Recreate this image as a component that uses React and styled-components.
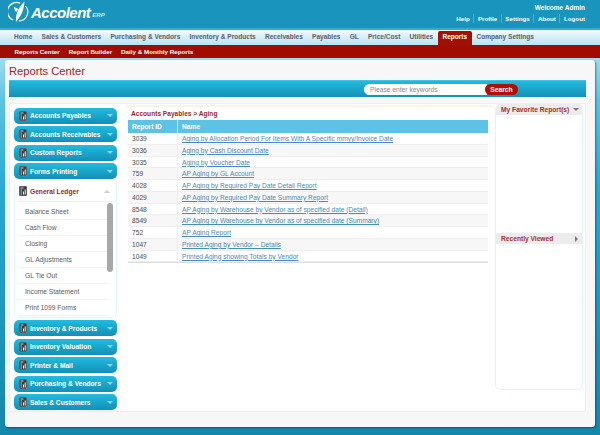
import { createGlobalStyle, styled } from 'styled-components';

const navTabs = [
  'Home',
  'Sales & Customers',
  'Purchasing & Vendors',
  'Inventory & Products',
  'Receivables',
  'Payables',
  'GL',
  'Price/Cost',
  'Utilities',
  'Reports',
  'Company Settings',
];
const topGroups = ['Accounts Payables', 'Accounts Receivables', 'Custom Reports', 'Forms Printing'];
const bottomGroups = ['Inventory & Products', 'Inventory Valuation', 'Printer & Mail', 'Purchasing & Vendors', 'Sales & Customers'];
const ledgerLinks = ['Balance Sheet', 'Cash Flow', 'Closing', 'GL Adjustments', 'GL Tie Out', 'Income Statement', 'Print 1099 Forms'];
const reports = [
  ['3039', 'Aging by Allocation Period For Items With A Specific mmyy/Invoice Date'],
  ['3036', 'Aging by Cash Discount Date'],
  ['3035', 'Aging by Voucher Date'],
  ['759', 'AP Aging by GL Account'],
  ['4028', 'AP Aging by Required Pay Date Detail Report'],
  ['4029', 'AP Aging by Required Pay Date Summary Report'],
  ['8548', 'AP Aging by Warehouse by Vendor as of specified date (Detail)'],
  ['8549', 'AP Aging by Warehouse by Vendor as of specified date (Summary)'],
  ['752', 'AP Aging Report'],
  ['1047', 'Printed Aging by Vendor – Details'],
  ['1049', 'Printed Aging showing Totals by Vendor'],
];

const ReportIcon = () => (
  <svg width="8" height="10" viewBox="0 0 8 10">
    <rect x="0" y="0" width="8" height="10" rx="1" fill="#3a3f42" stroke="#b9c4c8" strokeWidth="0.5" />
    <rect x="1.5" y="1.5" width="3" height="1" fill="#ccc" />
    <rect x="1.5" y="3.5" width="1.5" height="1" fill="#ccc" />
    <rect x="1.5" y="5.5" width="1.5" height="1" fill="#ccc" />
    <rect x="1.5" y="7.5" width="1.5" height="1" fill="#ccc" />
    <rect x="4" y="5.5" width="1" height="3" fill="#eee" />
    <rect x="5.7" y="3.5" width="1" height="5" fill="#eee" />
  </svg>
);

const Logo = () => (
  <svg width="22" height="22" viewBox="0 0 22 22">
    <path d="M12 2.2 A9 9 0 0 0 5 19" fill="none" stroke="#fff" strokeWidth="1.3" />
    <path d="M17.5 5 A9 9 0 0 1 11 20" fill="none" stroke="#fff" strokeWidth="1.1" />
    <path d="M16.5 0.5 C16 6 15 13 8 21 C7.5 15 9 8 16.5 0.5 Z" fill="#fff" />
    <path d="M8 11 C6.5 9 6 7.5 6 6 C8 6.5 9.5 7.5 10.5 8.5 Z" fill="#fff" />
  </svg>
);

const Group = ({ label }) => (
  <GroupBar>
    <ReportIcon />
    <GroupLabel>{label}</GroupLabel>
    <DownArrow $color="#8fd6ea" />
  </GroupBar>
);

const App = () => {
  return (
    <Page>
      <GlobalStyle />
      <Header>
        <Brand>
          <Logo />
          <BrandName>Accolent</BrandName>
          <BrandSuffix>ERP</BrandSuffix>
        </Brand>
        <UserBox>
          <Welcome>Welcome Admin</Welcome>
          <UserLinks>
            {['Help', 'Profile', 'Settings', 'About', 'Logout'].map((link) => (
              <UserLink key={link}>{link}</UserLink>
            ))}
          </UserLinks>
        </UserBox>
      </Header>

      <Nav>
        {navTabs.map((tab) => (
          <NavTab key={tab} $active={tab === 'Reports'}>
            {tab}
          </NavTab>
        ))}
      </Nav>
      <SubNav>
        {['Reports Center', 'Report Builder', 'Daily & Monthly Reports'].map((item) => (
          <SubNavItem key={item}>{item}</SubNavItem>
        ))}
      </SubNav>

      <Card>
        <Title>Reports Center</Title>
        <SearchBar>
          <SearchInput>Please enter keywords</SearchInput>
          <SearchButton>Search</SearchButton>
        </SearchBar>

        <Content>
          <Sidebar>
            {topGroups.map((group) => (
              <Group key={group} label={group} />
            ))}
            <OpenGroup>
              <OpenHeader>
                <ReportIcon />
                <OpenLabel>General Ledger</OpenLabel>
                <UpArrow />
              </OpenHeader>
              <LedgerList>
                {ledgerLinks.map((link) => (
                  <LedgerRow key={link}>{link}</LedgerRow>
                ))}
                <ScrollThumb />
              </LedgerList>
            </OpenGroup>
            {bottomGroups.map((group) => (
              <Group key={group} label={group} />
            ))}
          </Sidebar>

          <Middle>
            <CreamStripe />
            <Breadcrumb>Accounts Payables &gt; Aging</Breadcrumb>
            <Table>
              <HeadRow>
                <IdHead>Report ID</IdHead>
                <NameHead>Name</NameHead>
              </HeadRow>
              {reports.map(([id, name], index) => (
                <Row key={id} $odd={index % 2 === 1}>
                  <IdCell>{id}</IdCell>
                  <NameCell>
                    <ReportLink>{name}</ReportLink>
                  </NameCell>
                </Row>
              ))}
            </Table>
          </Middle>

          <RightPanel>
            <PanelHeader>
              <PanelTitle>My Favorite Report(s)</PanelTitle>
              <DownArrow $color="#777" />
            </PanelHeader>
            <FavoritesBody />
            <PanelHeader>
              <PanelTitle>Recently Viewed</PanelTitle>
              <RightArrow />
            </PanelHeader>
          </RightPanel>
        </Content>
      </Card>
    </Page>
  );
};

export default App;

const GlobalStyle = createGlobalStyle`
  html, body {
    margin: 0;
    padding: 0;
    overflow: hidden;
  }
  * {
    box-sizing: border-box;
  }
`;

const Page = styled.div`
  width: 600px;
  height: 435px;
  overflow: hidden;
  font-family: "Liberation Sans", Arial, sans-serif;
  background: linear-gradient(#9adcf0 60px, #5cc4e6 100px, #23aad6 190px, #1487ad 435px);
`;

const Header = styled.header`
  height: 30px;
  display: flex;
  justify-content: space-between;
  background: #1994bd;
  border-bottom: 2px solid #35abd0;
  padding: 0 15px 0 8px;
`;
const Brand = styled.div`
  display: flex;
  align-items: center;
  height: 28px;
  padding-bottom: 4px;
  color: #fff;
`;
const BrandName = styled.span`
  margin-left: 1px;
  font-size: 15px;
  font-weight: bold;
  font-style: italic;
  letter-spacing: -0.5px;
`;
const BrandSuffix = styled.span`
  margin: 5px 0 0 2px;
  font-size: 6px;
  font-weight: bold;
  font-style: italic;
  color: #cfeaf3;
`;
const UserBox = styled.div`
  display: flex;
  flex-direction: column;
  align-items: flex-end;
  padding-top: 3px;
  color: #fff;
  font-size: 6.5px;
  font-weight: bold;
`;
const Welcome = styled.div`
  height: 9px;
  line-height: 9px;
`;
const UserLinks = styled.div`
  display: flex;
  margin-top: 2px;
  font-size: 6.2px;
`;
const UserLink = styled.span`
  line-height: 9px;
  padding: 0 0 0 3.6px;
  margin-left: 3.6px;
  border-left: 1px solid #4eb0cf;

  &:first-child {
    border-left: none;
    margin-left: 0;
    padding-left: 0;
  }
`;

const Nav = styled.nav`
  height: 15px;
  display: flex;
  align-items: flex-start;
  padding-left: 9.5px;
  background: linear-gradient(#f4fbfd, #b6e3f1);
`;
const NavTab = styled.span`
  height: 14px;
  margin-top: 1px;
  line-height: 12px;
  padding: 0 4.62px;
  font-size: 6.55px;
  font-weight: bold;
  white-space: nowrap;
  border-radius: 2px 2px 0 0;
  color: ${(props) => (props.$active ? '#fff' : '#56606a')};
  background: ${(props) => (props.$active ? '#a00f00' : 'transparent')};
`;

const SubNav = styled.div`
  height: 13px;
  display: flex;
  align-items: center;
  padding-left: 10px;
  background: #a00d00;
`;
const SubNavItem = styled.span`
  padding: 0 4.5px;
  color: #fff;
  font-size: 6.25px;
  font-weight: bold;
  line-height: 10px;
  white-space: nowrap;
`;

const Card = styled.main`
  width: 590px;
  height: 367px;
  margin: 2px 0 0 5px;
  padding: 4px 9px 0 4px;
  background: #f7f7f7;
  border-radius: 3px;
  box-shadow: 1px 1px 2px rgba(0, 40, 60, 0.5);
`;
const Title = styled.h1`
  margin: 0;
  height: 16px;
  line-height: 14px;
  font-size: 11.2px;
  font-weight: normal;
  color: #a4231c;
`;
const SearchBar = styled.div`
  height: 17px;
  display: flex;
  align-items: center;
  justify-content: flex-end;
  padding-right: 68px;
  background: linear-gradient(#22bade, #1690b6);
  border-top: 1px solid #43c3e2;
`;
const SearchInput = styled.div`
  width: 123px;
  height: 11px;
  line-height: 11px;
  padding-left: 6px;
  margin-right: -2px;
  font-size: 6.7px;
  color: #888;
  background: #fff;
  border-radius: 6px 0 0 6px;
`;
const SearchButton = styled.div`
  width: 33px;
  height: 11px;
  line-height: 11px;
  text-align: center;
  font-size: 6.7px;
  font-weight: bold;
  color: #fff;
  background: #b00f04;
  border-radius: 6px;
`;

const Content = styled.div`
  height: 309px;
  margin-top: 6px;
  display: flex;
  align-items: flex-start;
  background: #fff;
  border: 1px solid #eee;
  border-radius: 2px;
`;

const Sidebar = styled.aside`
  width: 112px;
  flex: none;
  display: flex;
  flex-direction: column;
  gap: 2.5px;
  padding: 3.5px 5px 0 4px;
`;
const GroupBar = styled.div`
  height: 16px;
  display: flex;
  align-items: center;
  padding: 0 4px 0 5px;
  color: #fff;
  background: linear-gradient(#22bce0, #128fb7);
  border-radius: 5px;
`;
const GroupLabel = styled.span`
  flex: 1;
  margin-left: 3px;
  font-size: 6.65px;
  font-weight: bold;
  white-space: nowrap;
`;
const DownArrow = styled.span`
  width: 0;
  height: 0;
  border-left: 3px solid transparent;
  border-right: 3px solid transparent;
  border-top: 3.5px solid ${(props) => props.$color};
`;
const UpArrow = styled.span`
  width: 0;
  height: 0;
  margin-right: 2px;
  border-left: 3px solid transparent;
  border-right: 3px solid transparent;
  border-bottom: 3.5px solid #ccc;
`;
const RightArrow = styled.span`
  width: 0;
  height: 0;
  margin-right: 1px;
  border-top: 3px solid transparent;
  border-bottom: 3px solid transparent;
  border-left: 3.5px solid #777;
`;

const OpenGroup = styled.div`
  height: 136px;
  padding: 0 3px 0 3px;
  background: #fff;
  border: 1px solid #e4f5fa;
  border-top: none;
  border-radius: 5px;
`;
const OpenHeader = styled.div`
  height: 20px;
  display: flex;
  align-items: center;
  padding: 0 1px 0 1px;
  border-bottom: 1px solid #eee;
`;
const OpenLabel = styled.span`
  flex: 1;
  margin-left: 3px;
  font-size: 6.65px;
  font-weight: bold;
  color: #a4231c;
`;
const LedgerList = styled.div`
  position: relative;
  padding-top: 2px;
`;
const LedgerRow = styled.div`
  width: 90px;
  height: 16px;
  padding-left: 7px;
  line-height: 15px;
  font-size: 6.7px;
  color: #5c5c5c;
  border-bottom: 1px solid #f2f2f2;

  &:last-of-type {
    border-bottom: none;
  }
`;
const ScrollThumb = styled.div`
  position: absolute;
  top: 1px;
  right: 0;
  width: 6px;
  height: 69px;
  background: #a8a8a8;
  border-radius: 3px;
`;

const Middle = styled.section`
  width: 373px;
  flex: none;
  padding: 1px 5px 0 6px;
`;
const CreamStripe = styled.div`
  height: 2px;
  margin: 0 -3px;
  background: #fdf3e3;
`;
const Breadcrumb = styled.div`
  height: 13px;
  padding: 1px 0 0 3px;
  line-height: 12px;
  font-size: 6.6px;
  font-weight: bold;
  color: #9c2a24;
`;
const Table = styled.div`
  width: 360px;
  border-bottom: 1px solid #ddd;
  font-size: 6.65px;
`;
const HeadRow = styled.div`
  height: 13px;
  display: flex;
  align-items: stretch;
  color: #fff;
  font-weight: bold;
  background: #5cc3e6;
`;
const IdHead = styled.div`
  width: 50px;
  line-height: 13px;
  padding-left: 4px;
  border-right: 1px solid #bfe8f4;
`;
const NameHead = styled.div`
  flex: 1;
  line-height: 13px;
  padding-left: 4px;
`;
const Row = styled.div`
  height: 11.75px;
  display: flex;
  background: ${(props) => (props.$odd ? '#f7f7f7' : '#fff')};
  border-bottom: 1px solid #eee;
`;
const IdCell = styled.div`
  width: 50px;
  line-height: 11px;
  padding-left: 4px;
  color: #4c4c4c;
  border-right: 1px solid #eee;
`;
const NameCell = styled.div`
  flex: 1;
  line-height: 11px;
  padding-left: 4px;
  white-space: nowrap;
`;
const ReportLink = styled.a`
  color: #4a8cb8;
  text-decoration: underline;
`;

const RightPanel = styled.aside`
  width: 88px;
  height: 286px;
  flex: none;
  background: #fff;
  border: 1px solid #dff3f9;
  border-top: none;
  border-radius: 5px;
  overflow: hidden;
`;
const PanelHeader = styled.div`
  height: 11px;
  display: flex;
  align-items: center;
  justify-content: space-between;
  padding: 0 3px 0 5px;
  background: #ececec;
`;
const PanelTitle = styled.span`
  font-size: 6.65px;
  font-weight: bold;
  color: #a4312a;
  white-space: nowrap;
`;
const FavoritesBody = styled.div`
  height: 118px;
`;
